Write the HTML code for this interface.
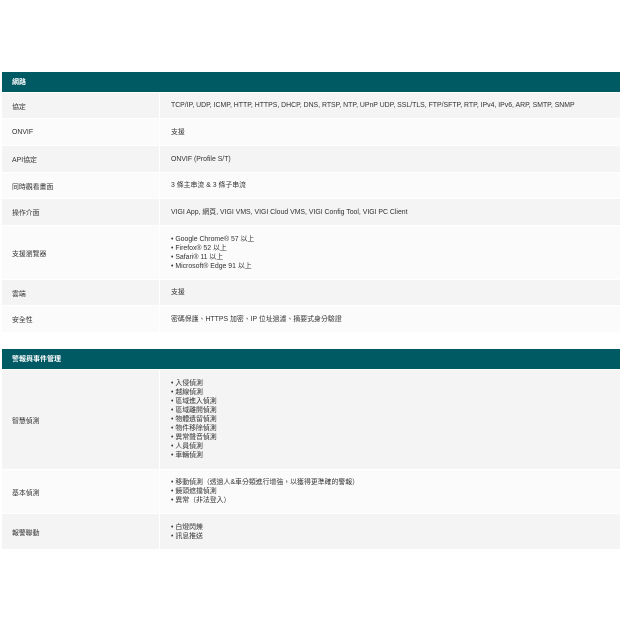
<!DOCTYPE html>
<html><head><meta charset="utf-8"><style>
body{margin:0;background:#fff;width:620px;height:620px;overflow:hidden;font-family:"Liberation Sans","Noto Sans CJK TC",sans-serif;color:#333;}
.h{position:absolute;left:2px;width:618px;background:#005a64;color:#fff;font-weight:bold;font-size:7px;box-sizing:border-box;padding-left:10px;display:flex;align-items:center;}
.r{position:absolute;left:2px;width:618px;display:flex;font-size:6.9px;border-top:1px solid #fff;box-sizing:border-box;}
.r.g{background:#f4f4f4}.r.w{background:#fbfbfb}
.l{width:158px;padding-left:10px;box-sizing:border-box;display:flex;align-items:center;border-right:1px solid #fff;}
.v{padding-left:11px;display:flex;flex-direction:column;justify-content:center;line-height:9px;}
</style></head><body>
<div class="h" style="top:72px;height:20px">網路</div>
<div class="r g" style="top:92px;height:26px"><div class="l">協定</div><div class="v">TCP/IP, UDP, ICMP, HTTP, HTTPS, DHCP, DNS, RTSP, NTP, UPnP UDP, SSL/TLS, FTP/SFTP, RTP, IPv4, IPv6, ARP, SMTP, SNMP</div></div>
<div class="r w" style="top:118px;height:27px"><div class="l">ONVIF</div><div class="v">支援</div></div>
<div class="r g" style="top:145px;height:27px"><div class="l">API協定</div><div class="v">ONVIF (Profile S/T)</div></div>
<div class="r w" style="top:172px;height:26px"><div class="l">同時觀看畫面</div><div class="v">3 條主串流 &amp; 3 條子串流</div></div>
<div class="r g" style="top:198px;height:27px"><div class="l">操作介面</div><div class="v">VIGI App, 網頁, VIGI VMS, VIGI Cloud VMS, VIGI Config Tool, VIGI PC Client</div></div>
<div class="r w" style="top:225px;height:54px"><div class="l">支援瀏覽器</div><div class="v"><div>• Google Chrome® 57 以上</div><div>• Firefox® 52 以上</div><div>• Safari® 11 以上</div><div>• Microsoft® Edge 91 以上</div></div></div>
<div class="r g" style="top:279px;height:26px"><div class="l">雲端</div><div class="v">支援</div></div>
<div class="r w" style="top:305px;height:27px"><div class="l">安全性</div><div class="v">密碼保護、HTTPS 加密、IP 位址過濾、摘要式身分驗證</div></div>

<div class="h" style="top:349px;height:20px">警報與事件管理</div>
<div class="r g" style="top:369px;height:100px"><div class="l">智慧偵測</div><div class="v"><div>• 入侵偵測</div><div>• 越線偵測</div><div>• 區域進入偵測</div><div>• 區域離開偵測</div><div>• 物體遺留偵測</div><div>• 物件移除偵測</div><div>• 異常聲音偵測</div><div>• 人員偵測</div><div>• 車輛偵測</div></div></div>
<div class="r w" style="top:469px;height:44px"><div class="l">基本偵測</div><div class="v"><div>• 移動偵測（透過人&amp;車分類進行增強，以獲得更準確的警報）</div><div>• 鏡頭遮擋偵測</div><div>• 異常（非法登入）</div></div></div>
<div class="r g" style="top:513px;height:36px"><div class="l">報警聯動</div><div class="v"><div>• 白燈閃爍</div><div>• 訊息推送</div></div></div>
</body></html>
